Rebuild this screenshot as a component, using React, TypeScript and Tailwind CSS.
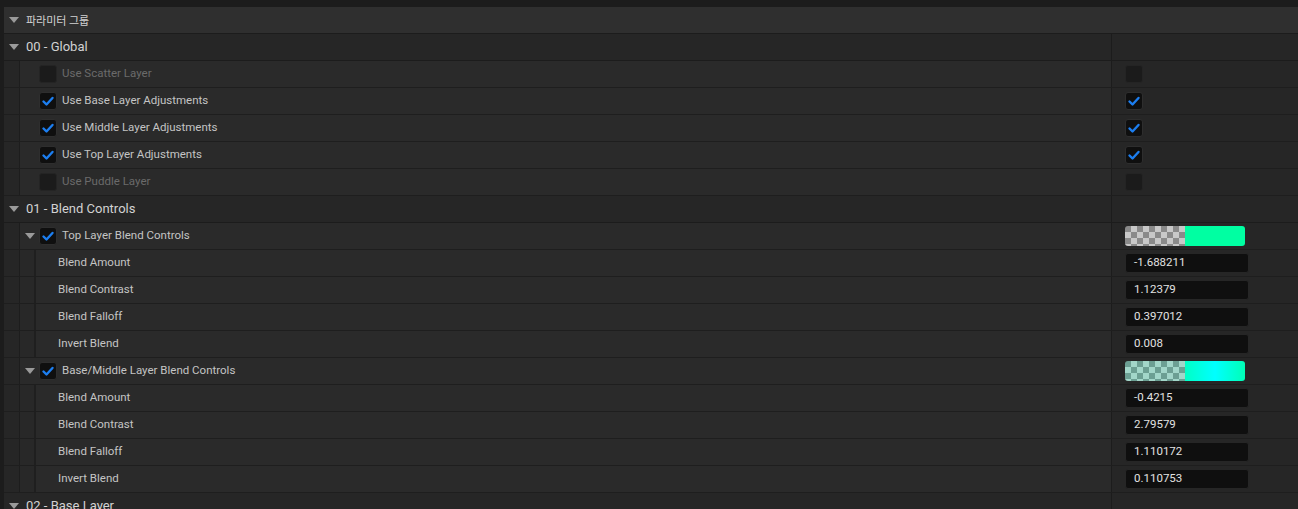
import type { ReactNode } from 'react';

const Tri = ({ className = '' }: { className?: string }) => (
  <svg width="10" height="6" viewBox="0 0 10 6" className={className}>
    <path d="M0 0 L10 0 L5 6 Z" fill="#9a9a9a" />
  </svg>
);

function Check({ on, dim }: { on?: boolean; dim?: boolean }) {
  return (
    <div
      className={`flex h-[18px] w-[18px] shrink-0 items-center justify-center rounded-[3px] border ${
        dim ? 'border-[#242424] bg-[#1b1b1b]' : 'border-[#2e2e2e] bg-[#0f0f0f]'
      }`}
    >
      {on && (
        <svg width="14" height="14" viewBox="0 0 14 14">
          <path d="M2.5 7.5 L5.5 10.5 L11.5 4" fill="none" stroke="#1c7ef0" strokeWidth="2.4" strokeLinecap="round" strokeLinejoin="round" />
        </svg>
      )}
    </div>
  );
}

function Num({ v }: { v: string }) {
  return (
    <div className="flex h-5 w-[124px] items-center rounded-[3px] border border-[#262626] bg-[#0f0f0f] pl-2 text-[11.5px] text-[#e2e2e2]">
      {v}
    </div>
  );
}

function Swatch({ tint }: { tint?: boolean }) {
  return (
    <div className="flex h-5 w-[120px] overflow-hidden rounded-[3px]">
      <div
        className={`h-full w-[60px] bg-[length:12px_12px] ${
          tint
            ? 'bg-[conic-gradient(#a2d6c9_25%,#6c9f93_0_50%,#a2d6c9_0_75%,#6c9f93_0)]'
            : 'bg-[conic-gradient(#c8c8c8_25%,#8a8a8a_0_50%,#c8c8c8_0_75%,#8a8a8a_0)]'
        }`}
      />
      <div
        className={`h-full flex-1 ${
          tint ? 'bg-[linear-gradient(to_right,#00ffc6,#00ffff_50%,#00ffb6)]' : 'bg-[#00ffa2]'
        }`}
      />
    </div>
  );
}

function Category({ label }: { label: string }) {
  return (
    <div className="flex h-[27px] shrink-0 border-b border-[#1c1c1c]">
      <div className="flex w-[1107px] items-center gap-[7px] bg-[#262626] pl-[5px] text-[13px] text-[#d2d2d2]">
        <Tri />
        <span>{label}</span>
      </div>
      <div className="flex-1 border-l border-[#1c1c1c] bg-[#262626]" />
    </div>
  );
}

function Row({ nested, left, right }: { nested?: boolean; left: ReactNode; right?: ReactNode }) {
  return (
    <div className="flex h-[27px] shrink-0 border-b border-[#1e1e1e]">
      <div className="w-4 shrink-0 border-r border-[#1d1d1d] bg-[#262626]" />
      {nested && <div className="w-4 shrink-0 border-r-2 border-[#1f1f1f] bg-[#282828]" />}
      <div className="flex flex-1 items-center bg-[#2a2a2a] text-[11.5px] text-[#c4c4c4]">{left}</div>
      <div className="flex w-[187px] shrink-0 items-center border-l border-[#1c1c1c] bg-[#262626] pl-[13px]">
        {right}
      </div>
    </div>
  );
}

function Toggle({ label, on }: { label: string; on: boolean }) {
  return (
    <Row
      left={
        <div className="flex items-center gap-[5px] pl-[19px]">
          <Check on={on} dim={!on} />
          <span className={on ? 'text-[#c4c4c4]' : 'text-[#6a6a6a]'}>{label}</span>
        </div>
      }
      right={<Check on={on} dim={!on} />}
    />
  );
}

function Group({ label, tint }: { label: string; tint?: boolean }) {
  return (
    <Row
      left={
        <div className="flex items-center pl-1">
          <Tri className="ml-px mr-[4px]" />
          <Check on />
          <span className="ml-[5px]">{label}</span>
        </div>
      }
      right={<Swatch tint={tint} />}
    />
  );
}

function Param({ label, v }: { label: string; v: string }) {
  return <Row nested left={<span className="pl-[22px]">{label}</span>} right={<Num v={v} />} />;
}

export default function App() {
  return (
    <div className="flex h-[509px] w-[1298px] flex-col overflow-hidden bg-[#1c1c1c] pl-1 pt-[7px] font-['Roboto','Noto_Sans_CJK_KR',sans-serif]">
      <div className="flex h-[27px] shrink-0 items-center gap-[7px] border-b border-[#1c1c1c] bg-[#2f2f2f] pl-[5px] text-[13px] text-[#d2d2d2]">
        <Tri />
        <span className="font-['Noto_Sans_CJK_KR',sans-serif] text-[11px]">파라미터 그룹</span>
      </div>

      <Category label="00 - Global" />
      <Toggle label="Use Scatter Layer" on={false} />
      <Toggle label="Use Base Layer Adjustments" on />
      <Toggle label="Use Middle Layer Adjustments" on />
      <Toggle label="Use Top Layer Adjustments" on />
      <Toggle label="Use Puddle Layer" on={false} />

      <Category label="01 - Blend Controls" />
      <Group label="Top Layer Blend Controls" />
      <Param label="Blend Amount" v="-1.688211" />
      <Param label="Blend Contrast" v="1.12379" />
      <Param label="Blend Falloff" v="0.397012" />
      <Param label="Invert Blend" v="0.008" />
      <Group label="Base/Middle Layer Blend Controls" tint />
      <Param label="Blend Amount" v="-0.4215" />
      <Param label="Blend Contrast" v="2.79579" />
      <Param label="Blend Falloff" v="1.110172" />
      <Param label="Invert Blend" v="0.110753" />

      <Category label="02 - Base Layer" />
    </div>
  );
}
